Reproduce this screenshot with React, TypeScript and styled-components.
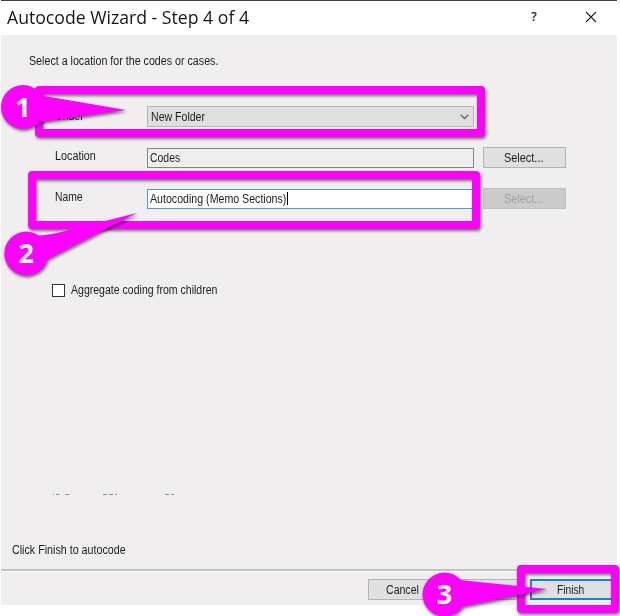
import React from "react";
import styled, { createGlobalStyle } from "styled-components";

const GlobalStyle = createGlobalStyle`
  * { box-sizing: border-box; }
  body { margin: 0; background: #fff; overflow: hidden; }
`;

const Page = styled.main`
  position: relative;
  width: 620px;
  height: 616px;
  overflow: hidden;
  background: #fff;
  font-family: "Liberation Sans", Arial, sans-serif;
  font-size: 12px;
  color: #1c1c1c;
`;

const Dialog = styled.section`
  display: flex;
  flex-direction: column;
  width: 616px;
  height: 605px;
  margin-left: 1px;
  background: #f0eeef;
  border-top: 1px solid #3d4150;
`;

const TitleBar = styled.header`
  display: flex;
  align-items: center;
  flex: none;
  height: 34px;
  padding: 0 20px 2px 6px;
  background: #fff;
`;

const Title = styled.h1`
  flex: 1;
  margin: 0;
  font: 400 18px/32px "Open Sans", sans-serif;
  white-space: nowrap;
  color: #161616;
`;

const Stretch = styled.span<{ $x: number }>`
  display: inline-block;
  transform: scaleX(${(p) => p.$x});
  transform-origin: 0 50%;
  white-space: nowrap;
`;

const HelpMark = styled.span`
  width: 12px;
  margin-right: 45px;
  font: 600 12px/30px "Open Sans", sans-serif;
  text-align: center;
`;

const Body = styled.div`
  display: flex;
  flex-direction: column;
  flex: 1;
  padding: 18px 0 0;
`;

const Intro = styled.p`
  height: 16px;
  margin: 0 0 37px 28px;
  line-height: 16px;
`;

const Form = styled.div`
  display: grid;
  grid-template-columns: 92px 327px 83px;
  grid-template-rows: 21px 21px 21px;
  column-gap: 0;
  row-gap: 20px;
  margin-left: 54px;
`;

const Label = styled.label<{ $drop?: number }>`
  padding-top: ${(p) => p.$drop ?? 0}px;
  line-height: 18px;
`;

const Field = styled.div<{ $kind: "select" | "readonly" | "active" }>`
  display: flex;
  align-items: center;
  justify-content: space-between;
  height: ${(p) => (p.$kind === "select" ? 21 : 20)}px;
  margin-top: ${(p) => (p.$kind === "select" ? 0 : 1)}px;
  padding: 0 4px 0 ${(p) => (p.$kind === "select" ? 3 : 2)}px;
  padding-bottom: ${(p) => (p.$kind === "select" ? 0 : 1)}px;
  border: 1px solid
    ${(p) => ({ select: "#b4b4b4", readonly: "#858587", active: "#4a9cdb" })[p.$kind]};
  background: ${(p) => ({ select: "#e0dfe0", readonly: "#f0eff0", active: "#fff" })[p.$kind]};
`;

const Caret = styled.span`
  display: inline-block;
  width: 1px;
  height: 13px;
  background: #000;
`;

const Value = styled.span<{ $width?: number }>`
  display: flex;
  align-items: center;
  width: ${(p) => (p.$width ? `${p.$width}px` : "auto")};
`;

const ValueText = styled.span`
  flex: 1;
  min-width: 0;
`;

const Button = styled.button<{ $tone?: "disabled" | "primary" }>`
  display: flex;
  align-items: center;
  width: 83px;
  height: 21px;
  padding: 1px 0 0 20px;
  font: inherit;
  border: ${(p) => (p.$tone === "primary" ? "2px solid #1684d0" : "1px solid #b3b3b3")};
  border-color: ${(p) => (p.$tone === "disabled" ? "#c0c0c0" : "")};
  background: ${(p) => (p.$tone === "disabled" ? "#cbcbcb" : "#e1e0e1")};
  color: ${(p) => (p.$tone === "disabled" ? "#a2a2a2" : "#1c1c1c")};
`;

const FormButton = styled(Button)`
  margin-left: 9px;
`;

const CheckRow = styled.label`
  display: flex;
  align-items: center;
  gap: 6px;
  height: 14px;
  margin: 74px 0 0 51px;
`;

const CheckBox = styled.span`
  width: 13px;
  height: 13px;
  border: 1px solid #333;
  background: #fff;
`;

const Remnant = styled.svg`
  display: block;
  width: 130px;
  height: 3px;
  margin: 196px 0 0 51px;
`;

const Hint = styled.p`
  height: 16px;
  margin: 45px 0 0 11px;
  line-height: 18px;
`;

const Footer = styled.footer`
  display: flex;
  flex: none;
  height: 36px;
  padding: 8px 0 0 367px;
  border-top: 2px solid #c3c2c3;
  box-shadow: inset 0 1px #fff;
`;

const FooterButton = styled(Button)<{ $width: number; $pad: number; $gap?: number }>`
  flex: none;
  width: ${(p) => p.$width}px;
  margin-left: ${(p) => p.$gap ?? 0}px;
  padding-left: ${(p) => p.$pad}px;
`;

const Annotations = styled.svg`
  position: absolute;
  inset: 0;
  width: 620px;
  height: 616px;
  pointer-events: none;
`;

const Frame = styled.rect`
  fill: none;
  stroke: #ff00ff;
  stroke-width: 8px;
  stroke-linejoin: round;
  filter: drop-shadow(1.5px 2px 1.5px rgba(0, 0, 0, 0.55));
`;

const Pointer = styled.g`
  fill: #ff00ff;
  filter: drop-shadow(1.5px 2px 1.5px rgba(0, 0, 0, 0.55));
`;

const Digit = styled.text`
  fill: #fff;
  font: 700 27px "Open Sans", sans-serif;
  text-anchor: middle;
`;

const callouts = [
  { n: 1, cx: 23, cy: 107, tail: "M40 94 L44 96 L126 110 L41 122 Z", rect: [39, 90, 442, 43] },
  { n: 2, cx: 26.3, cy: 253.5, tail: "M34 236 Q52 235 69 230 L137 213 L46 260 Z", rect: [32, 175, 444, 50] },
  { n: 3, cx: 444.5, cy: 594.5, tail: "M460 580 L547 589 L461 607 Z", rect: [521, 569, 94, 40] },
];

export default function App() {
  return (
    <Page>
      <GlobalStyle />
      <Dialog>
        <TitleBar>
          <Title><Stretch $x={0.98}>Autocode Wizard - Step 4 of 4</Stretch></Title>
          <HelpMark>?</HelpMark>
          <svg width="12" height="12" viewBox="0 0 12 12" fill="none" stroke="#222" strokeWidth="1.1">
            <path d="M1 1 11 11M11 1 1 11" />
          </svg>
        </TitleBar>
        <Body>
          <Intro><Stretch $x={0.89}>Select a location for the codes or cases.</Stretch></Intro>
          <Form>
            <Label $drop={1}><Stretch $x={0.88}>Under</Stretch></Label>
            <Field $kind="select">
              <Stretch $x={0.88}>New Folder</Stretch>
              <svg width="9" height="6" viewBox="0 0 9 6" fill="none" stroke="#666" strokeWidth="1.4">
                <path d="M.7.8 4.5 4.6 8.3.8" />
              </svg>
            </Field>
            <span />
            <Label><Stretch $x={0.9}>Location</Stretch></Label>
            <Field $kind="readonly"><Stretch $x={0.87}>Codes</Stretch></Field>
            <FormButton><Stretch $x={0.91}>Select...</Stretch></FormButton>
            <Label><Stretch $x={0.86}>Name</Stretch></Label>
            <Field $kind="active">
              <Value $width={138}>
                <ValueText><Stretch $x={0.885}>Autocoding (Memo Sections)</Stretch></ValueText>
                <Caret />
              </Value>
            </Field>
            <FormButton $tone="disabled"><Stretch $x={0.91}>Select...</Stretch></FormButton>
          </Form>
          <CheckRow>
            <CheckBox />
            <Stretch $x={0.878}>Aggregate coding from children</Stretch>
          </CheckRow>
          <Remnant viewBox="0 0 130 3">
            <path
              d="M1 1.5h1M4 1.5h3.5M13 1.5h4M51 1.5h4M57 1.5h4M63 1.5h2M113 1.5h4M119 1.5h3"
              stroke="#909090"
            />
          </Remnant>
          <Hint><Stretch $x={0.892}>Click Finish to autocode</Stretch></Hint>
        </Body>
        <Footer>
          <FooterButton $width={83} $pad={17}><Stretch $x={0.88}>Cancel</Stretch></FooterButton>
          <FooterButton $width={70} $pad={0} aria-label="Back" />
          <FooterButton $tone="primary" $width={86} $pad={25} $gap={9}>
            <Stretch $x={0.85}>Finish</Stretch>
          </FooterButton>
        </Footer>
      </Dialog>
      <Annotations viewBox="0 0 620 616">
        {callouts.map(({ n, cx, cy, tail, rect: [x, y, w, h] }) => (
          <g key={n}>
            <Frame x={x} y={y} width={w} height={h} />
            <Pointer>
              <circle cx={cx} cy={cy} r="22" />
              <path d={tail} />
            </Pointer>
            <Digit x={cx} y={cy + 9.5}>{n}</Digit>
          </g>
        ))}
      </Annotations>
    </Page>
  );
}
